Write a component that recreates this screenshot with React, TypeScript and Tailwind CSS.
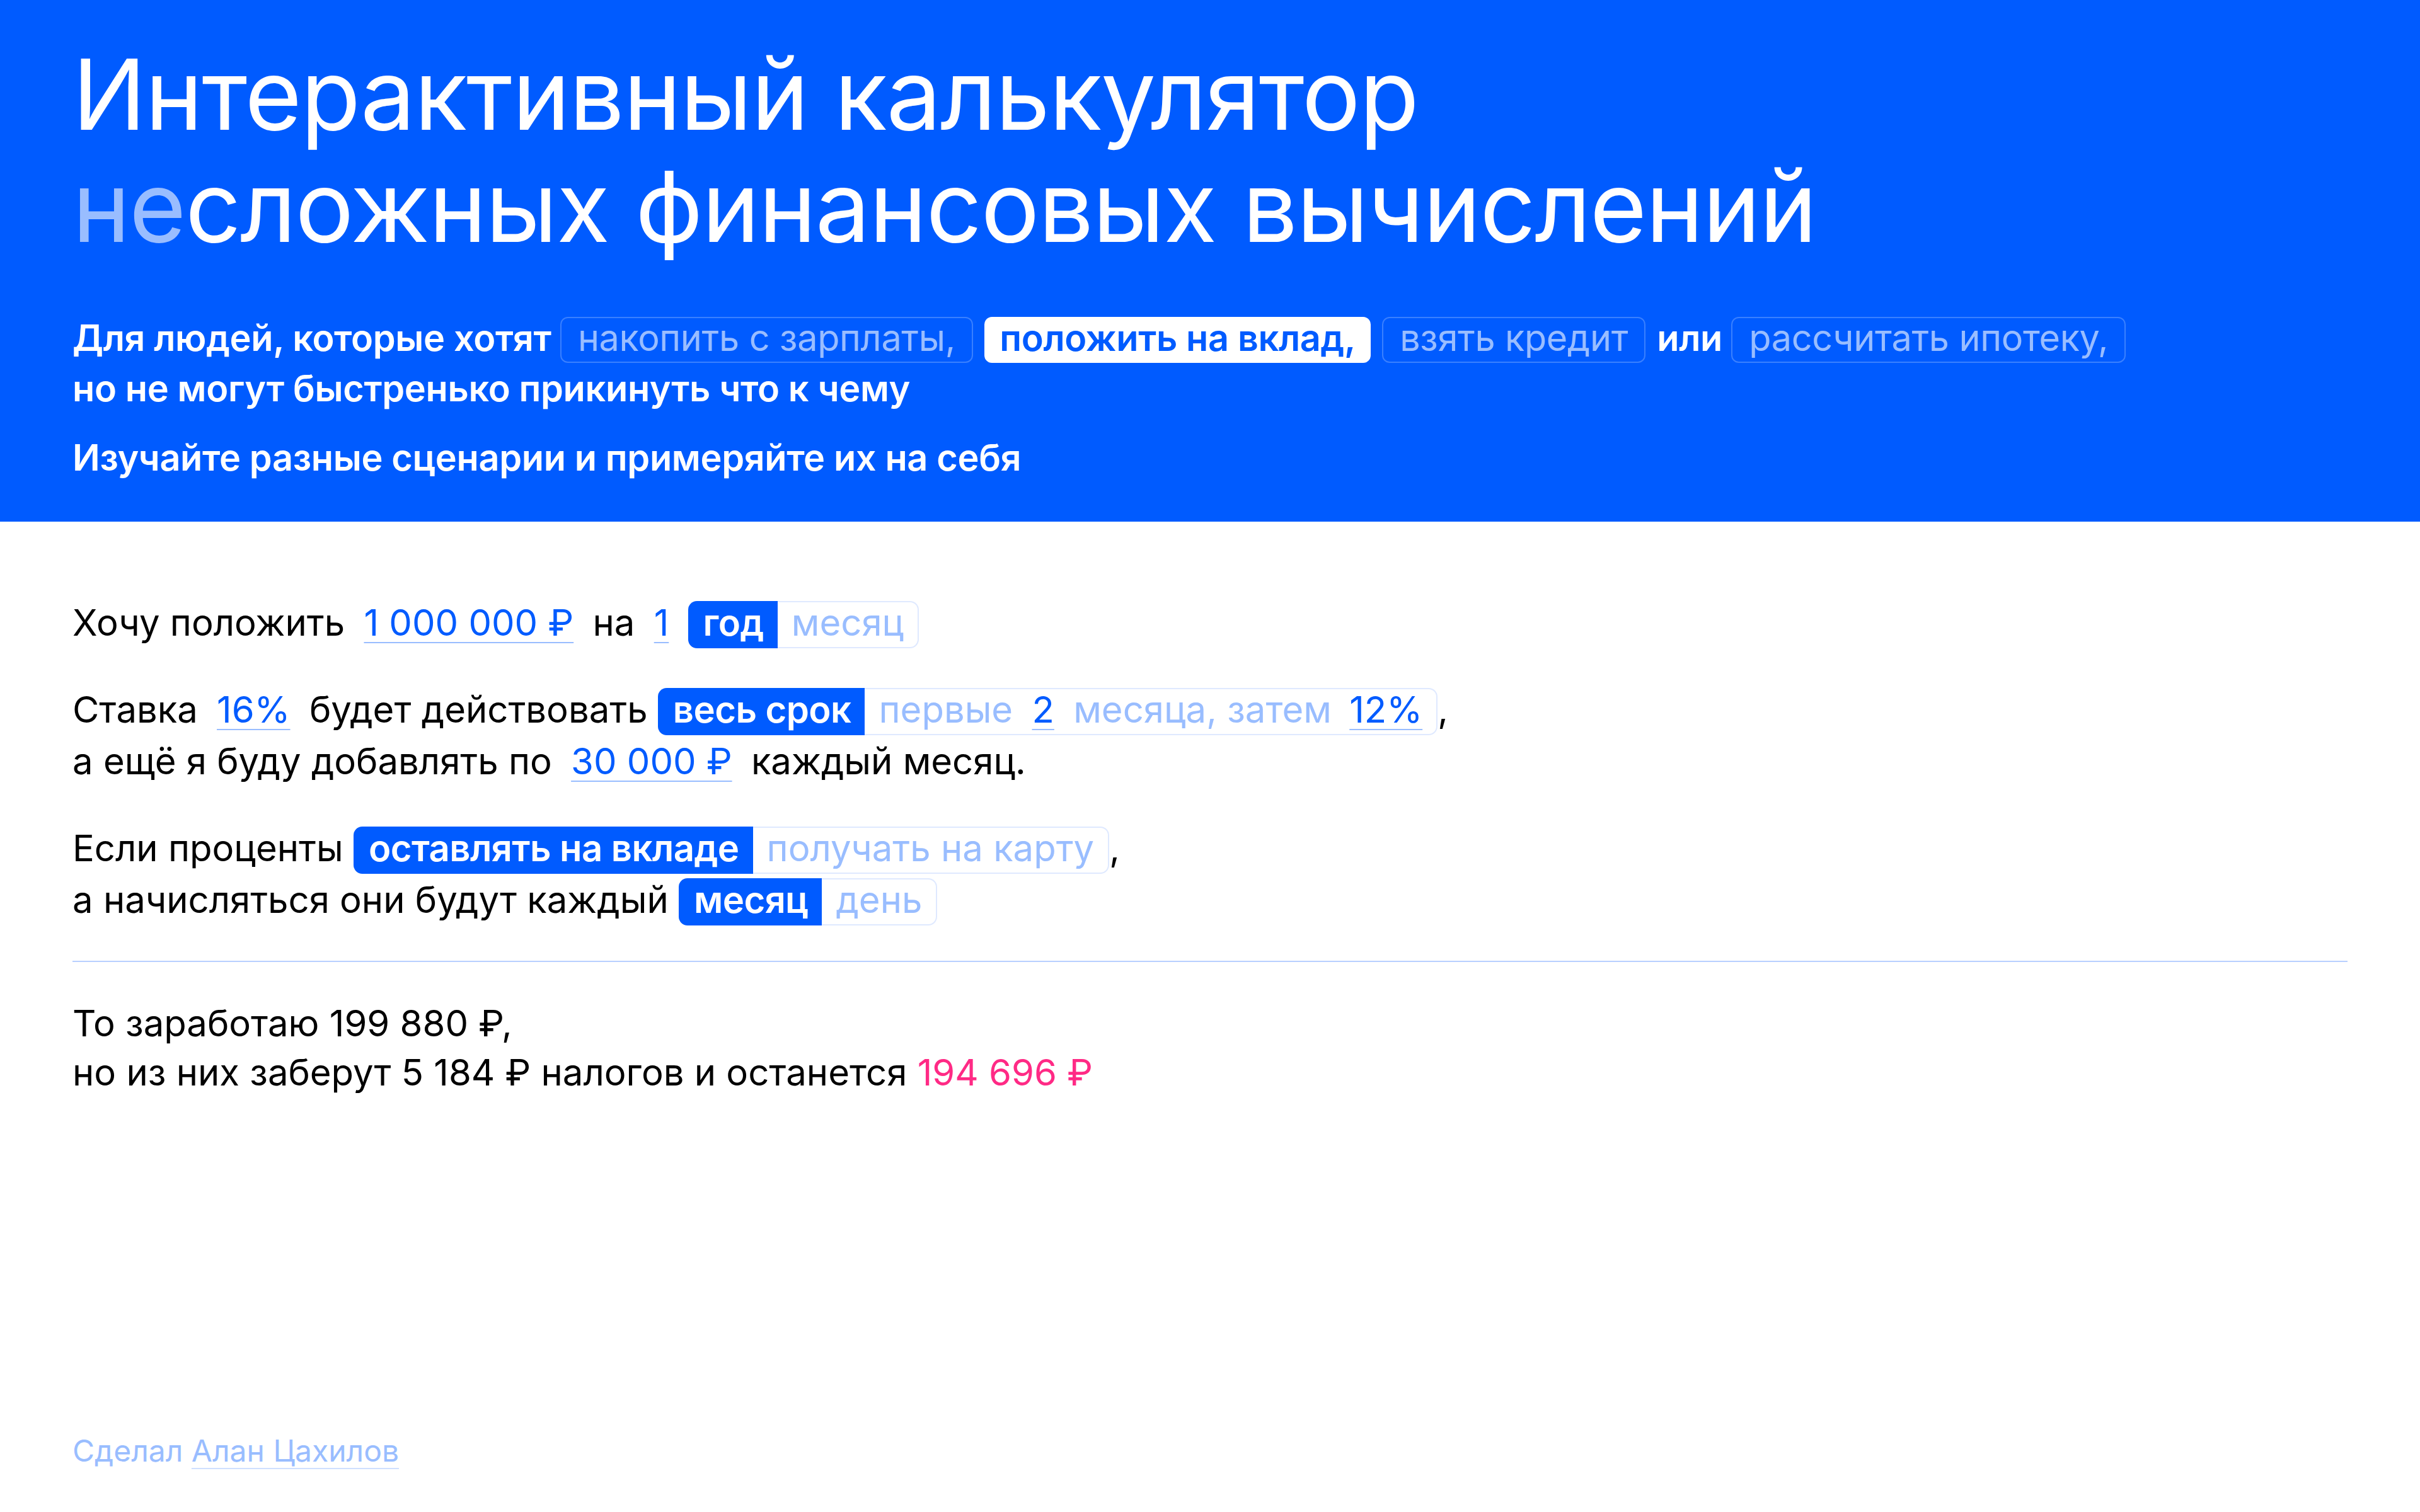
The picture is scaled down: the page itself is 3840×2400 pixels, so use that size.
import React from 'react'

type PillProps = { children: React.ReactNode; active?: boolean }

// pill-shaped choice in the blue header
const Pill: React.FC<PillProps> = ({ children, active }) => (
    <span
        className={
            active
                ? 'mr-[4px] inline-block rounded-[12px] border-2 border-white bg-white px-[22px] pb-[6px] font-semibold leading-[63px] text-[#005bff]'
                : 'mr-[4px] inline-block rounded-[12px] border-2 border-[#3a80ff] px-[26px] pb-[6px] font-normal leading-[63px] text-[#99bdff]'
        }
    >
        {children}
    </span>
)

// editable number, shown as underlined blue text
const Field: React.FC<{ children: React.ReactNode; className?: string }> = ({ children, className }) => (
    <span
        className={
            'text-[#005bff] underline decoration-[#99bdff] decoration-2 underline-offset-[10px] ' +
            (className ?? 'mx-[14px]')
        }
    >
        {children}
    </span>
)

type Option = { label: React.ReactNode; active?: boolean }

const Segmented: React.FC<{ options: Option[] }> = ({ options }) => (
    <span className="inline-flex align-baseline">
        {options.map((o, i) => {
            const first = i === 0
            const last = i === options.length - 1
            return (
                <span
                    key={i}
                    className={[
                        'inline-block border-y-2 px-[22px] pb-[6px] leading-[65px]',
                        o.active
                            ? 'border-[#005bff] bg-[#005bff] font-semibold tracking-[-0.01em] text-white'
                            : 'border-[#dfe9ff] text-[#99bdff]',
                        first ? 'rounded-l-[14px] border-l-2' : '',
                        last ? 'rounded-r-[14px] border-r-2' : '',
                    ].join(' ')}
                >
                    {o.label}
                </span>
            )
        })}
    </span>
)

export default function App() {
    return (
        <div className="flex min-h-screen flex-col bg-white font-['Inter','Noto_Sans',sans-serif] text-black">
            <header className="bg-[#005bff] px-[115px] pt-[61px] pb-[62px] text-white">
                <h1 className="text-[155px] font-normal leading-[178px] tracking-[-0.01em]">
                    Интерактивный калькулятор
                    <br />
                    <span className="text-[#99bdff]">не</span>сложных финансовых вычислений
                </h1>
                <p className="mt-[79px] text-[57.6px] font-semibold leading-[80px] tracking-[-0.006em]">
                    Для людей, которые хотят <Pill>накопить с зарплаты,</Pill>{' '}
                    <Pill active>положить на вклад,</Pill> <Pill>взять кредит</Pill> или{' '}
                    <Pill>рассчитать ипотеку,</Pill>
                    <br />
                    но не могут быстренько прикинуть что к чему
                </p>
                <p className="mt-[30px] text-[57.6px] font-semibold leading-[80px] tracking-[-0.006em]">
                    Изучайте разные сценарии и примеряйте их на себя
                </p>
            </header>

            <main className="px-[115px] pt-[119px] text-[58px] leading-[82px]">
                <p>
                    Хочу положить <Field>1 000 000 ₽</Field> на <Field>1</Field>{' '}
                    <Segmented options={[{ label: 'год', active: true }, { label: 'месяц' }]} />
                </p>
                <p className="mt-[56px]">
                    Ставка <Field>16%</Field> будет действовать{' '}
                    <Segmented
                        options={[
                            { label: 'весь срок', active: true },
                            {
                                label: (
                                    <>
                                        первые <Field>2</Field> месяца, затем{' '}
                                        <Field className="ml-[12px]">12%</Field>
                                    </>
                                ),
                            },
                        ]}
                    />
                    ,
                    <br />
                    а ещё я буду добавлять по <Field>30 000 ₽</Field> каждый месяц.
                </p>
                <p className="mt-[56px]">
                    Если проценты{' '}
                    <Segmented
                        options={[
                            { label: 'оставлять на вкладе', active: true },
                            { label: 'получать на карту' },
                        ]}
                    />
                    ,
                    <br />
                    а начисляться они будут каждый{' '}
                    <Segmented options={[{ label: 'месяц', active: true }, { label: 'день' }]} />
                </p>

                <div className="mt-[56px] h-[2px] bg-[#b8d0ff]" />

                <p className="mt-[58px] leading-[78px]">
                    То заработаю 199 880 ₽,
                    <br />
                    но из них заберут 5 184 ₽ налогов и останется{' '}
                    <span className="text-[#ff2a85]">194 696 ₽</span>
                </p>
            </main>

            <footer className="mt-auto px-[115px] pb-[64px] text-[48px] leading-[67px] text-[#99bdff]">
                Сделал{' '}
                <a className="underline decoration-[#cfe0ff] decoration-2 underline-offset-[10px]">
                    Алан Цахилов
                </a>
            </footer>
        </div>
    )
}
